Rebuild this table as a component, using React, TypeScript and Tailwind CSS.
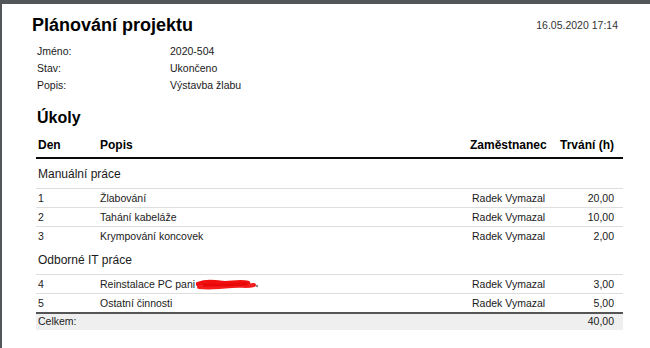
const rows = [
  {
    name: 'Manuální práce',
    items: [
      { den: '1', popis: 'Žlabování', emp: 'Radek Vymazal', hours: '20,00' },
      { den: '2', popis: 'Tahání kabeláže', emp: 'Radek Vymazal', hours: '10,00' },
      { den: '3', popis: 'Krympování koncovek', emp: 'Radek Vymazal', hours: '2,00' },
    ],
  },
  {
    name: 'Odborné IT práce',
    items: [
      { den: '4', popis: 'Reinstalace PC pani', emp: 'Radek Vymazal', hours: '3,00', redacted: true },
      { den: '5', popis: 'Ostatní činnosti', emp: 'Radek Vymazal', hours: '5,00' },
    ],
  },
];

const info = [
  ['Jméno:', '2020-504'],
  ['Stav:', 'Ukončeno'],
  ['Popis:', 'Výstavba žlabu'],
];

function Scribble() {
  return (
    <svg width="64" height="12" viewBox="0 0 64 12" className="inline-block align-middle ml-[1px]">
      <path d="M2 5 C 10 2, 18 3, 26 4 S 42 2, 52 4" stroke="#f01010" strokeWidth="4.5" fill="none" strokeLinecap="round" />
      <path d="M3 8 C 14 9, 26 8, 36 7 S 50 8, 58 6" stroke="#f41c1c" strokeWidth="4" fill="none" strokeLinecap="round" />
      <path d="M8 6 L 30 6 L 50 5" stroke="#e80808" strokeWidth="3" fill="none" strokeLinecap="round" />
      <circle cx="61" cy="7" r="1.2" fill="#888" />
    </svg>
  );
}

export default function App() {
  return (
    <div
      className="w-[650px] h-[348px] bg-[#525659] pt-[4px] pl-[2px] overflow-hidden"
      style={{ fontFamily: '"Liberation Sans", Arial, sans-serif' }}
    >
      <div className="h-full bg-white pt-[10px] pl-[30px] pr-[27px] text-[#1a1a1a]">
        <div className="flex items-center justify-between h-[23px]">
          <h1 className="text-[18px] font-bold leading-[23px] text-black">Plánování projektu</h1>
          <span className="text-[10.5px] text-[#333] mr-[5px] mt-[1px]">16.05.2020 17:14</span>
        </div>

        <div className="mt-[6px] ml-[5px] text-[10.5px] leading-[17px]">
          {info.map(([k, v]) => (
            <div key={k} className="flex">
              <span className="w-[133px]">{k}</span>
              <span>{v}</span>
            </div>
          ))}
        </div>

        <h2 className="mt-[14px] ml-[5px] text-[16px] font-bold leading-[19px] text-black">Úkoly</h2>

        <div className="ml-[4px]">
          <div className="grid grid-cols-[62px_372px_85px_68px] h-[32px] pt-[5px] items-center border-b-2 border-[#0a0a0a] text-[12px] font-bold text-black">
            <span className="pl-[2px]">Den</span>
            <span className="pl-[2px]">Popis</span>
            <span>Zaměstnanec</span>
            <span className="text-right pr-[9px]">Trvání (h)</span>
          </div>

          {rows.map((g) => (
            <div key={g.name}>
              <div className="h-[29px] flex items-center pl-[2px] pt-[1px] text-[12px]">{g.name}</div>
              {g.items.map((r) => (
                <div
                  key={r.den}
                  className="grid grid-cols-[62px_372px_85px_68px] h-[19px] pt-[1px] items-center border-t border-[#dedede] text-[10.5px]"
                >
                  <span className="pl-[2px]">{r.den}</span>
                  <span className="pl-[2px] whitespace-nowrap">
                    {r.popis}
                    {r.redacted && <Scribble />}
                  </span>
                  <span className="pl-[2px]">{r.emp}</span>
                  <span className="text-right pr-[9px]">{r.hours}</span>
                </div>
              ))}
            </div>
          ))}

          <div className="flex justify-between h-[18px] items-center border-t-2 border-[#555] bg-[#efefef] text-[10.5px]">
            <span className="pl-[2px]">Celkem:</span>
            <span className="pr-[9px]">40,00</span>
          </div>
        </div>
      </div>
    </div>
  );
}
